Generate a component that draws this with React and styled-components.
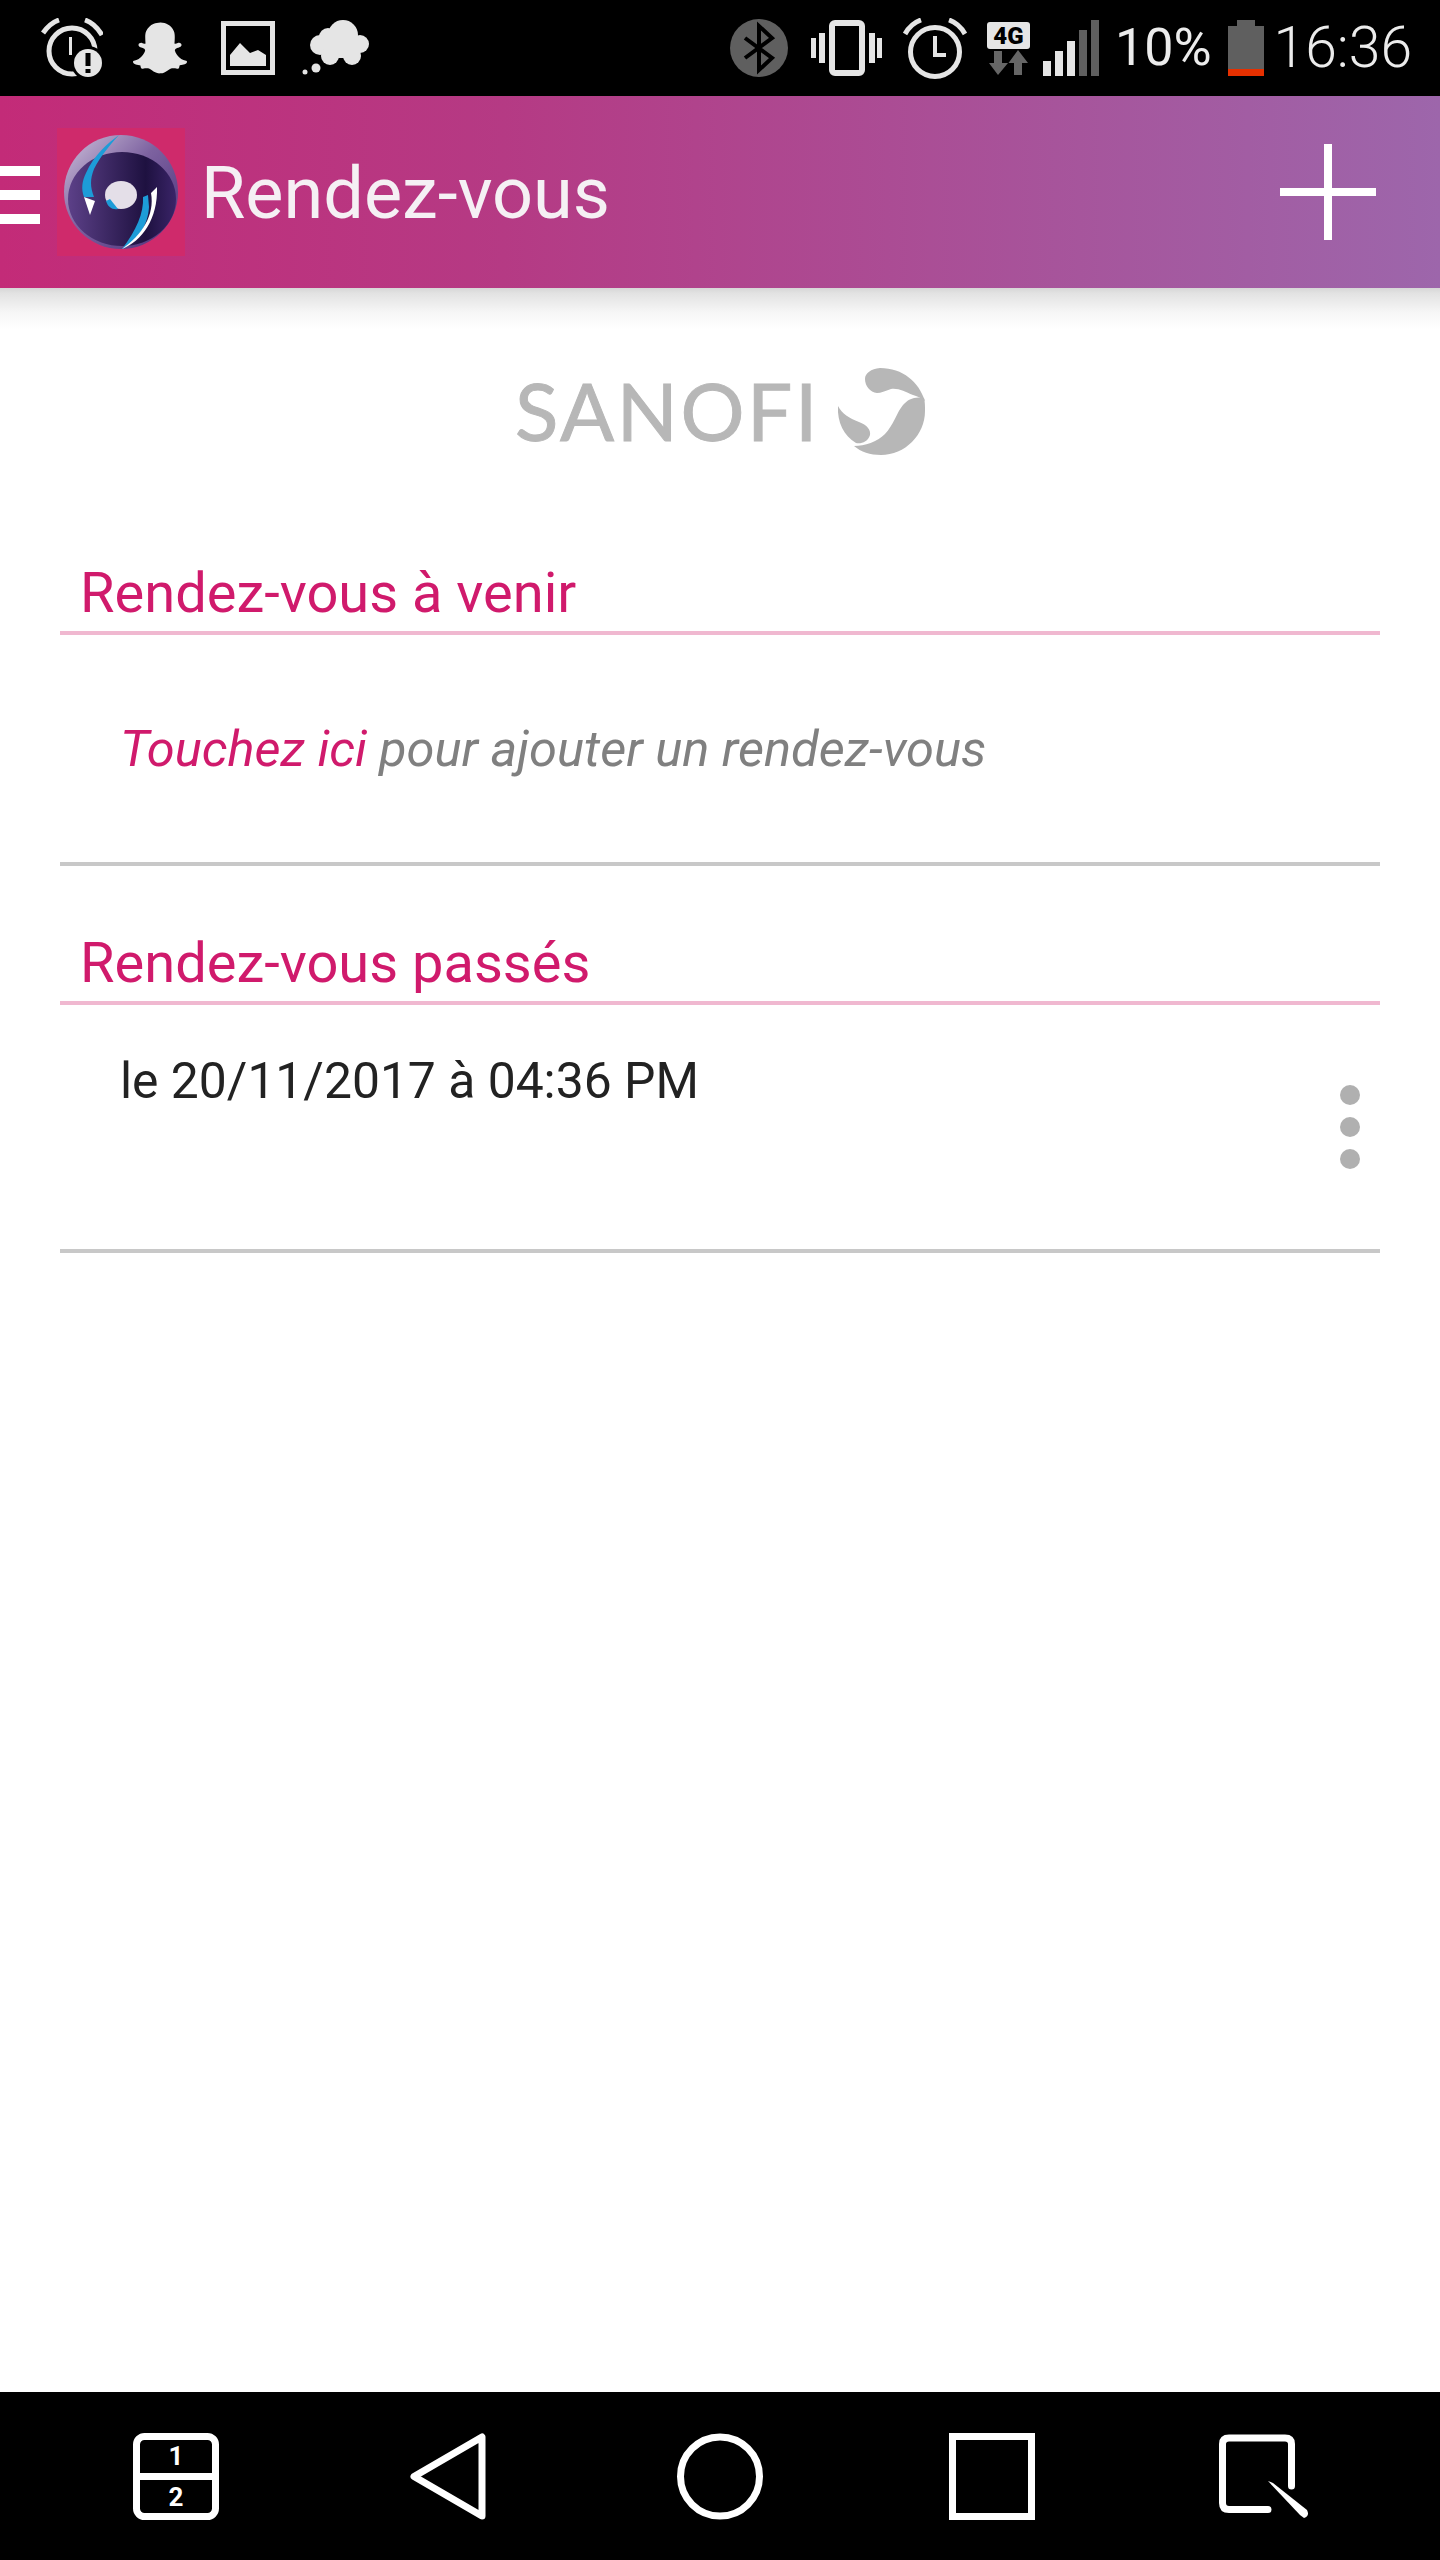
import React from "react";
import styled, { createGlobalStyle } from "styled-components";
import { FaSnapchatGhost } from "react-icons/fa";

const GlobalStyle = createGlobalStyle`
  html, body {
    margin: 0;
    padding: 0;
    background: #fff;
    font-family: Roboto, "Liberation Sans", sans-serif;
  }
  * { box-sizing: border-box; }
`;

const Screen = styled.div`
  width: 1440px;
  height: 2560px;
  display: flex;
  flex-direction: column;
  overflow: hidden;
`;

const StatusBar = styled.div`
  height: 96px;
  flex: none;
  background: #000;
  display: flex;
  align-items: center;
  padding: 0 28px 0 41px;
  color: #e5e5e5;
`;

const StatusGroup = styled.div`
  display: flex;
  align-items: center;
  margin-left: ${(p) => (p.$right ? "auto" : "0")};
`;

const Gap = styled.span`
  display: flex;
  margin-left: ${(p) => p.$left || 0}px;
`;

const StatusText = styled.span`
  font-size: ${(p) => p.$size}px;
  font-weight: ${(p) => p.$weight || 300};
  line-height: 60px;
  margin-left: ${(p) => p.$left}px;
  color: #ececec;
`;

const Toolbar = styled.header`
  height: 192px;
  flex: none;
  display: flex;
  align-items: center;
  background: linear-gradient(90deg, #c32b78 0%, #b53a84 35%, #9d66ab 100%);
`;

const Burger = styled.div`
  width: 40px;
  margin-top: 6px;
  display: flex;
  flex-direction: column;
  gap: 14px;
  span {
    display: block;
    height: 10px;
    background: #fff;
  }
`;

const LogoBox = styled.div`
  width: 128px;
  height: 128px;
  margin-left: 17px;
  background: #cf2a6b;
  display: flex;
  align-items: center;
  justify-content: center;
`;

const ToolbarTitle = styled.h1`
  margin: 3px 0 0 16px;
  font-size: 72px;
  font-weight: 400;
  color: #f5f0f4;
  line-height: 80px;
`;

const AddButton = styled.div`
  margin-left: auto;
  margin-right: 64px;
  width: 96px;
  height: 96px;
  position: relative;
  &::before,
  &::after {
    content: "";
    position: absolute;
    background: #fff;
  }
  &::before {
    left: 44px;
    top: 0;
    width: 8px;
    height: 96px;
  }
  &::after {
    top: 44px;
    left: 0;
    height: 8px;
    width: 96px;
  }
`;

const Main = styled.main`
  flex: 1;
  padding: 0 60px;
  background: linear-gradient(#d6d6d6 0, #e2e2e2 5px, #f6f6f6 24px, #fff 42px) no-repeat;
  background-size: 100% 44px;
`;

const BrandRow = styled.div`
  height: 246px;
  padding-top: 80px;
  display: flex;
  justify-content: center;
  align-items: flex-start;
`;

const BrandName = styled.span`
  font-family: Lato, "Liberation Sans", sans-serif;
  font-size: 80px;
  font-weight: 400;
  line-height: 84px;
  letter-spacing: 2.6px;
  -webkit-text-stroke: 1px #b7b7b7;
  color: #b7b7b7;
  width: 322px;
`;

const Section = styled.section`
  margin-top: ${(p) => p.$top || 0}px;
  border-bottom: 4px solid #c8c8c8;
`;

const SectionTitle = styled.h2`
  margin: 0;
  height: 101px;
  padding: 27px 0 0 20px;
  font-size: 56px;
  line-height: 64px;
  font-weight: 400;
  color: #d01a6c;
  border-bottom: 4px solid #f0b8d0;
`;

const EmptyRow = styled.div`
  height: 227px;
  padding-left: 60px;
  display: flex;
  align-items: center;
  font-size: 50.6px;
  font-style: italic;
  color: #808080;
  em {
    color: #d01a6c;
    margin-right: 12px;
  }
`;

const ItemRow = styled.div`
  height: 244px;
  padding: 46px 20px 0 60px;
  display: flex;
  justify-content: space-between;
  align-items: flex-start;
`;

const ItemDate = styled.span`
  font-size: 49.8px;
  line-height: 60px;
  color: #222;
`;

const Kebab = styled.div`
  margin-top: 34px;
  display: flex;
  flex-direction: column;
  gap: 12px;
  span {
    width: 20px;
    height: 20px;
    border-radius: 50%;
    background: #b0b0b0;
  }
`;

const NavBar = styled.nav`
  height: 168px;
  flex: none;
  background: #000;
  padding: 0 40px;
  display: grid;
  grid-template-columns: repeat(5, 1fr);
  align-items: center;
  justify-items: center;
`;

const AlarmExclaimIcon = () => (
  <svg width="62" height="60" viewBox="0 0 62 60" fill="none">
    <circle cx="31" cy="33" r="23" stroke="#e5e5e5" strokeWidth="5" />
    <path d="M2 15 C7 8 12 4 18 2 M44 2 C50 4 56 9 61 17" stroke="#e5e5e5" strokeWidth="5" />
    <path d="M29.5 19 V37" stroke="#e5e5e5" strokeWidth="3" />
    <circle cx="47" cy="45" r="17" fill="#000" />
    <circle cx="47" cy="45" r="14" fill="#e5e5e5" />
    <path d="M47 35 V48 M47 51 V55" stroke="#000" strokeWidth="5" />
  </svg>
);

const ImageIcon = () => (
  <svg width="54" height="54" viewBox="0 0 54 54">
    <rect x="2.5" y="2.5" width="49" height="49" fill="none" stroke="#e5e5e5" strokeWidth="5" />
    <path d="M9 45 V34 L19 22 L29 32 L37 29 L45 34 V45 Z" fill="#e5e5e5" />
  </svg>
);

const CloudIcon = () => (
  <svg width="68" height="56" viewBox="0 0 68 56" fill="#e5e5e5">
    <circle cx="41" cy="15" r="15" />
    <circle cx="26" cy="17" r="9" />
    <circle cx="18" cy="25" r="10" />
    <circle cx="58" cy="24" r="9" />
    <circle cx="50" cy="36" r="9" />
    <circle cx="28" cy="36" r="9" />
    <rect x="22" y="16" width="34" height="22" />
    <circle cx="14" cy="48" r="4.5" />
    <circle cx="3" cy="52" r="2.5" />
  </svg>
);

const BluetoothIcon = () => (
  <svg width="58" height="58" viewBox="0 0 58 58" fill="none">
    <circle cx="29" cy="29" r="29" fill="#5f5f5f" />
    <path d="M15 19 L42 39 L29 51 V7 L42 19 L15 39" stroke="#000" strokeWidth="4" />
  </svg>
);

const VibrateIcon = () => (
  <svg width="72" height="56" viewBox="0 0 72 56">
    <rect x="21" y="3" width="30" height="50" rx="3" fill="none" stroke="#e5e5e5" strokeWidth="6" />
    <g fill="#e5e5e5">
      <rect x="0" y="18" width="5" height="20" />
      <rect x="8" y="13" width="6" height="30" />
      <rect x="58" y="13" width="6" height="30" />
      <rect x="66" y="18" width="5" height="20" />
    </g>
  </svg>
);

const AlarmIcon = () => (
  <svg width="64" height="61" viewBox="0 0 64 61" fill="none" stroke="#e5e5e5">
    <circle cx="32" cy="34" r="24.5" strokeWidth="5" />
    <path d="M2 16 C6 9 12 4 18 2 M46 2 C52 4 58 9 62 16" strokeWidth="5" />
    <path d="M32 18 V37 H43" strokeWidth="4" />
  </svg>
);

const NetworkIcon = () => (
  <svg width="43" height="53" viewBox="0 0 43 53">
    <rect x="0" y="0" width="43" height="27" rx="3" fill="#e5e5e5" />
    <text x="21.5" y="22" textAnchor="middle" fontFamily="Roboto, sans-serif" fontWeight="900" fontSize="24" fill="#000">
      4G
    </text>
    <path d="M7 29 H15 V41 H21 L11 53 L2 41 H7 Z M27 53 V41 H21.5 L31 28 L41 41 H35 V53 Z" fill="#666" />
  </svg>
);

const SignalIcon = () => (
  <svg width="56" height="56" viewBox="0 0 56 56">
    <rect x="0" y="41" width="8" height="15" fill="#e5e5e5" />
    <rect x="12" y="31" width="8" height="25" fill="#e5e5e5" />
    <rect x="24" y="21" width="8" height="35" fill="#e5e5e5" />
    <rect x="36" y="10" width="8" height="46" fill="#5f5f5f" />
    <rect x="48" y="0" width="8" height="56" fill="#5f5f5f" />
  </svg>
);

const BatteryIcon = () => (
  <svg width="36" height="56" viewBox="0 0 36 56">
    <path d="M9 0 H27 V6 H36 V56 H0 V6 H9 Z" fill="#5f5f5f" />
    <rect x="0" y="49" width="36" height="7" fill="#e63000" />
  </svg>
);

const AppLogo = () => (
  <svg width="114" height="114" viewBox="0 0 114 114">
    <defs>
      <linearGradient id="logoRim" x1="0" y1="0" x2="1" y2="1">
        <stop offset="0" stopColor="#cfc3dc" />
        <stop offset="0.45" stopColor="#7d62a0" />
        <stop offset="1" stopColor="#4a2f78" />
      </linearGradient>
      <linearGradient id="logoCore" x1="0" y1="0" x2="1" y2="0">
        <stop offset="0" stopColor="#5c4088" />
        <stop offset="0.72" stopColor="#1e1140" />
        <stop offset="1" stopColor="#3a2468" />
      </linearGradient>
    </defs>
    <circle cx="57" cy="57" r="57" fill="url(#logoRim)" />
    <ellipse cx="58" cy="64" rx="54" ry="47" fill="url(#logoCore)" />
    <path d="M55 0 C44 8 30 20 22 38 C18 46 17 54 20 62 L30 62 C26 52 26 44 30 34 C36 22 46 10 55 0 Z" fill="#1d9cd8" />
    <path d="M20 62 L31 66 L26 80 Z" fill="#fff" />
    <path d="M58 114 C74 106 84 90 85 72 L84 60 L79 62 C80 78 72 96 58 114 Z" fill="#1d9cd8" />
    <path d="M58 114 C78 106 94 84 93 52 L87 58 C91 80 78 100 58 114 Z" fill="#fff" />
    <ellipse cx="57" cy="60" rx="16" ry="14" fill="#e4dfe8" />
    <path d="M42 66 C44 72 48 75 54 74 L46 64 Z" fill="#1d9cd8" />
  </svg>
);

const SanofiMark = () => (
  <svg width="88" height="87" viewBox="0 0 88 87" fill="#b7b7b7">
    <path d="M43 0 C66 0 82 14 88 33 C84 30 80 28 76 27 C68 24 62 20 54 21 C48 23 44 25 40 25 C33 24 28 18 28 11 C28 5 34 1 43 0 Z" />
    <path d="M87 30 C78 28 71 31 66 37 C60 44 56 58 48 66 C40 74 28 78 17 78 C24 84 33 87 44 87 C68 87 88 67 88 43 C88 38 88 34 87 30 Z" />
    <path d="M1 38 C5 46 12 50 22 54 C30 57 34 62 33 67 C31 74 24 76 19 75 C7 68 0 54 1 38 Z" />
  </svg>
);

const SplitIcon = () => (
  <svg width="86" height="87" viewBox="0 0 86 87" fill="none">
    <rect x="3.5" y="3.5" width="79" height="80" rx="8" stroke="#fff" strokeWidth="7" />
    <path d="M3 43.5 H83" stroke="#fff" strokeWidth="7" />
    <text x="43" y="32" textAnchor="middle" fontFamily="Roboto, sans-serif" fontWeight="700" fontSize="26" fill="#fff">1</text>
    <text x="43" y="73" textAnchor="middle" fontFamily="Roboto, sans-serif" fontWeight="700" fontSize="26" fill="#fff">2</text>
  </svg>
);

const BackIcon = () => (
  <svg width="76" height="87" viewBox="0 0 76 87" fill="none">
    <path d="M72 4 V83 L4 43.5 Z" stroke="#fff" strokeWidth="7" strokeLinejoin="round" />
  </svg>
);

const HomeIcon = () => (
  <svg width="86" height="87" viewBox="0 0 86 87" fill="none">
    <circle cx="43" cy="43.5" r="39.5" stroke="#fff" strokeWidth="7" />
  </svg>
);

const RecentsIcon = () => (
  <svg width="86" height="87" viewBox="0 0 86 87" fill="none">
    <rect x="3.5" y="3.5" width="79" height="80" stroke="#fff" strokeWidth="7" />
  </svg>
);

const CaptureIcon = () => (
  <svg width="90" height="85" viewBox="0 0 90 85" fill="none">
    <path d="M72.5 52 V10 Q72.5 4 66 4 H10 Q3.5 4 3.5 10 V69 Q3.5 75.5 10 75.5 H49" stroke="#fff" strokeWidth="7" strokeLinecap="round" />
    <path d="M49 47 L54 49 L88 76 Q91 82 85 84 L81 81 Z" fill="#fff" />
  </svg>
);

export default function App() {
  return (
    <Screen>
      <GlobalStyle />
      <StatusBar>
        <StatusGroup>
          <AlarmExclaimIcon />
          <Gap $left={30}>
            <FaSnapchatGhost size={54} color="#e5e5e5" />
          </Gap>
          <Gap $left={34}>
            <ImageIcon />
          </Gap>
          <Gap $left={27}>
            <CloudIcon />
          </Gap>
        </StatusGroup>
        <StatusGroup $right>
          <BluetoothIcon />
          <Gap $left={23}>
            <VibrateIcon />
          </Gap>
          <Gap $left={20}>
            <AlarmIcon />
          </Gap>
          <Gap $left={20}>
            <NetworkIcon />
          </Gap>
          <Gap $left={13}>
            <SignalIcon />
          </Gap>
          <StatusText $size={52} $left={16} $weight={400}>10%</StatusText>
          <Gap $left={16}>
            <BatteryIcon />
          </Gap>
          <StatusText $size={57} $left={10}>16:36</StatusText>
        </StatusGroup>
      </StatusBar>

      <Toolbar>
        <Burger>
          <span />
          <span />
          <span />
        </Burger>
        <LogoBox>
          <AppLogo />
        </LogoBox>
        <ToolbarTitle>Rendez-vous</ToolbarTitle>
        <AddButton />
      </Toolbar>

      <Main>
        <BrandRow>
          <BrandName>SANOFI</BrandName>
          <SanofiMark />
        </BrandRow>

        <Section>
          <SectionTitle>Rendez-vous à venir</SectionTitle>
          <EmptyRow>
            <em>Touchez ici</em> pour ajouter un rendez-vous
          </EmptyRow>
        </Section>

        <Section $top={38}>
          <SectionTitle>Rendez-vous passés</SectionTitle>
          <ItemRow>
            <ItemDate>le 20/11/2017 à 04:36 PM</ItemDate>
            <Kebab>
              <span />
              <span />
              <span />
            </Kebab>
          </ItemRow>
        </Section>
      </Main>

      <NavBar>
        <SplitIcon />
        <BackIcon />
        <HomeIcon />
        <RecentsIcon />
        <CaptureIcon />
      </NavBar>
    </Screen>
  );
}
